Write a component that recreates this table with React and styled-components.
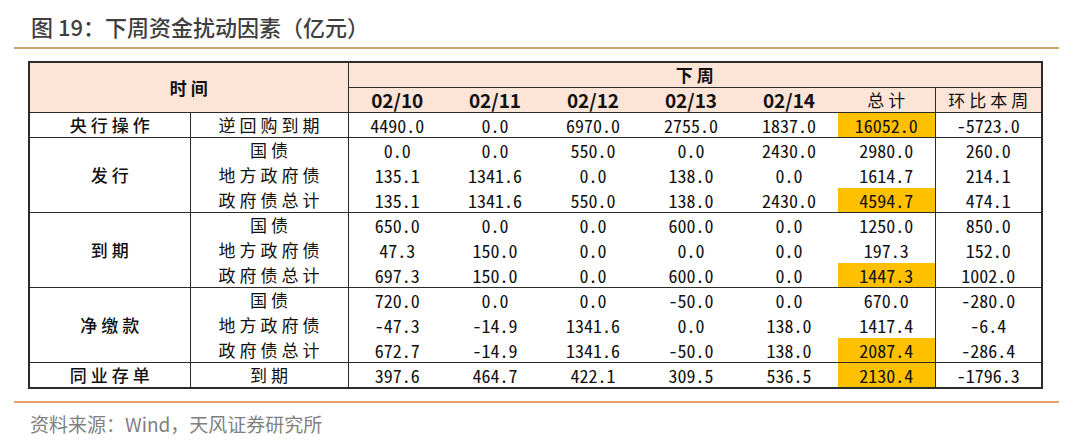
import React from 'react';
import styled, { createGlobalStyle } from 'styled-components';

const GlobalStyle = createGlobalStyle`
    html, body {
        margin: 0;
        padding: 0;
        background: #ffffff;
    }
    body {
        font-family: 'Noto Sans CJK SC', 'Noto Sans', sans-serif;
    }
`;

const Page = styled.div`
    width: 1080px;
    height: 446px;
    padding: 0 21px 0 14px;
    box-sizing: border-box;
    display: flex;
    flex-direction: column;
`;

const Title = styled.h1`
    margin: 0;
    padding: 11px 0 0 17px;
    height: 47px;
    flex-shrink: 0;
    box-sizing: border-box;
    font-size: 22px;
    line-height: 30px;
    font-weight: 500;
    color: #3f3f3f;
    font-family: 'Noto Sans CJK SC', 'Noto Sans', sans-serif;
`;

const Rule = styled.div`
    height: 2px;
    flex-shrink: 0;
    background: ${(p) => p.color};
`;

const TableWrap = styled.div`
    padding: 12px 0 0 14px;
    height: 352px;
    flex-shrink: 0;
    box-sizing: border-box;
`;

const Table = styled.table`
    border-collapse: collapse;
    table-layout: fixed;
    width: 1013px;
    border: 2px solid #2b2b2b;
    color: #111;
`;

const Row = styled.tr`
    height: 25px;
`;

const Head = styled.th`
    background: #fce4d6;
    padding: 0;
    font-weight: ${(p) => (p.bold ? 700 : 400)};
    font-size: ${(p) => (p.date ? '19px' : '17px')};
    letter-spacing: ${(p) => (p.date ? '0' : '4px')};
    text-indent: ${(p) => (p.date ? '0' : '4px')};
    line-height: 24px;
    text-align: center;
    font-family: 'Noto Sans CJK SC', sans-serif;
    border-right: ${(p) => (p.right ? '1px solid #2b2b2b' : 'none')};
    border-bottom: ${(p) => (p.under ? '1px solid #2b2b2b' : 'none')};
`;

const Label = styled.td`
    padding: 0;
    text-align: center;
    font-size: 17px;
    letter-spacing: 4px;
    text-indent: 4px;
    line-height: 24px;
    font-weight: ${(p) => (p.bold ? 500 : 400)};
    font-family: 'Noto Sans CJK SC', sans-serif;
    border-right: 1px solid #2b2b2b;
    border-top: ${(p) => (p.top ? '1px solid #2b2b2b' : 'none')};
    vertical-align: middle;
`;

const Num = styled.td`
    padding: 0;
    text-align: center;
    font-size: 18px;
    line-height: 24px;
    font-family: 'Noto Sans Mono CJK SC', 'DejaVu Sans Mono', monospace;
    background: ${(p) => (p.hl ? '#ffc000' : 'transparent')};
    border-right: ${(p) => (p.right ? '1px solid #2b2b2b' : 'none')};
    border-top: ${(p) => (p.top ? '1px solid #2b2b2b' : 'none')};
`;

const Source = styled.div`
    padding: 9px 0 0 16px;
    font-size: 19px;
    line-height: 24px;
    color: #7f7f7f;
    font-family: 'Noto Sans CJK SC', 'Noto Sans', sans-serif;
`;

const dates = ['02/10', '02/11', '02/12', '02/13', '02/14'];

const groups = [
    {
        name: '央行操作',
        items: [['逆回购到期', ['4490.0', '0.0', '6970.0', '2755.0', '1837.0'], '16052.0', '-5723.0', true]],
    },
    {
        name: '发行',
        items: [
            ['国债', ['0.0', '0.0', '550.0', '0.0', '2430.0'], '2980.0', '260.0'],
            ['地方政府债', ['135.1', '1341.6', '0.0', '138.0', '0.0'], '1614.7', '214.1'],
            ['政府债总计', ['135.1', '1341.6', '550.0', '138.0', '2430.0'], '4594.7', '474.1', true],
        ],
    },
    {
        name: '到期',
        items: [
            ['国债', ['650.0', '0.0', '0.0', '600.0', '0.0'], '1250.0', '850.0'],
            ['地方政府债', ['47.3', '150.0', '0.0', '0.0', '0.0'], '197.3', '152.0'],
            ['政府债总计', ['697.3', '150.0', '0.0', '600.0', '0.0'], '1447.3', '1002.0', true],
        ],
    },
    {
        name: '净缴款',
        items: [
            ['国债', ['720.0', '0.0', '0.0', '-50.0', '0.0'], '670.0', '-280.0'],
            ['地方政府债', ['-47.3', '-14.9', '1341.6', '0.0', '138.0'], '1417.4', '-6.4'],
            ['政府债总计', ['672.7', '-14.9', '1341.6', '-50.0', '138.0'], '2087.4', '-286.4', true],
        ],
    },
    {
        name: '同业存单',
        items: [['到期', ['397.6', '464.7', '422.1', '309.5', '536.5'], '2130.4', '-1796.3', true]],
    },
];

const colWidths = [161, 158, 98, 98, 98, 98, 98, 97, 107];

const App = () => {
    return (
        <>
            <GlobalStyle />
            <Page>
                <Title>图 19：下周资金扰动因素（亿元）</Title>
                <Rule color="#c9a365" />
                <TableWrap>
                    <Table>
                        <colgroup>
                            {colWidths.map((w, i) => (
                                <col key={i} style={{ width: w + 'px' }} />
                            ))}
                        </colgroup>
                        <thead>
                            <Row>
                                <Head colSpan={2} rowSpan={2} bold right>
                                    时间
                                </Head>
                                <Head colSpan={7} bold under>
                                    下周
                                </Head>
                            </Row>
                            <Row>
                                {dates.map((d) => (
                                    <Head key={d} date bold>
                                        {d}
                                    </Head>
                                ))}
                                <Head right>总计</Head>
                                <Head>环比本周</Head>
                            </Row>
                        </thead>
                        <tbody>
                            {groups.map((g) =>
                                g.items.map((item, idx) => {
                                    const [label, vals, total, diff, hl] = item;
                                    const top = idx === 0;
                                    return (
                                        <Row key={g.name + label}>
                                            {idx === 0 && (
                                                <Label rowSpan={g.items.length} top bold>
                                                    {g.name}
                                                </Label>
                                            )}
                                            <Label top={top}>{label}</Label>
                                            {vals.map((v, i) => (
                                                <Num key={i} top={top}>
                                                    {v}
                                                </Num>
                                            ))}
                                            <Num top={top} hl={hl} right>
                                                {total}
                                            </Num>
                                            <Num top={top}>{diff}</Num>
                                        </Row>
                                    );
                                })
                            )}
                        </tbody>
                    </Table>
                </TableWrap>
                <Rule color="#e2a56e" />
                <Source>资料来源：Wind，天风证券研究所</Source>
            </Page>
        </>
    );
};

export default App;
